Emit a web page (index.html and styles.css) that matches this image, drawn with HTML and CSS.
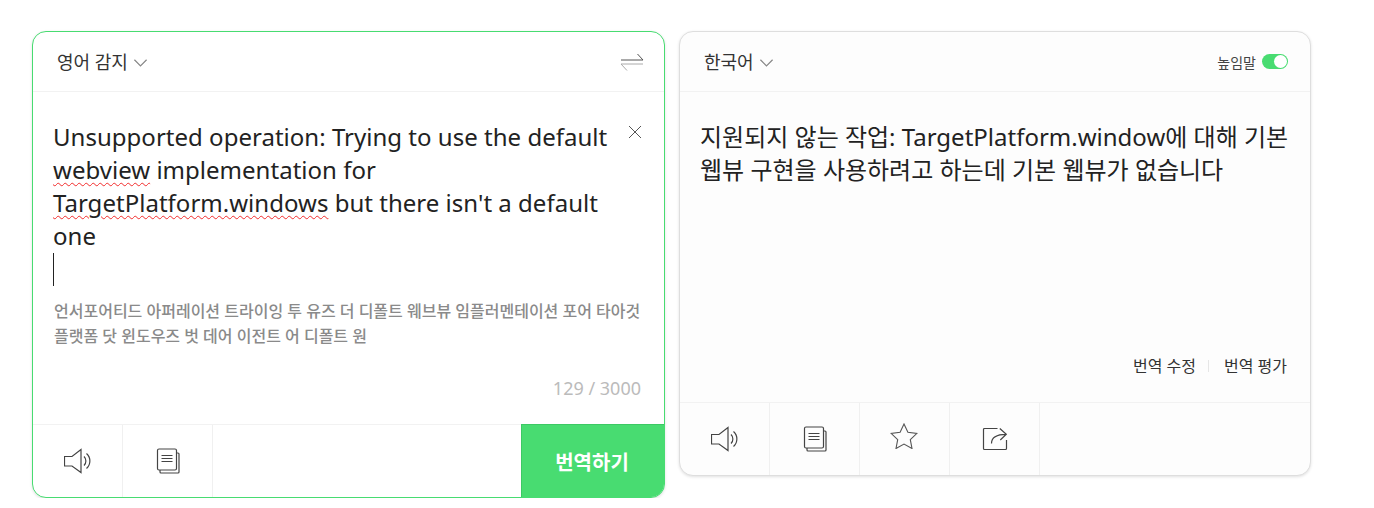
FILE: index.html
```html
<!DOCTYPE html>
<html lang="ko">
<head>
    <meta charset="UTF-8">
    <title>번역</title>
    <link rel="stylesheet" href="styles.css">
</head>
<body>

    <div class="page">
        <section class="card card-source">
            <div class="card-head">
                <button class="lang">영어 감지
                    <svg class="chevron" width="15" height="10" viewBox="0 0 16 10"><path d="M1.500 1.500 8 8l6.500-6.500"/></svg>
                </button>
                <svg class="swap" width="24" height="20" viewBox="0 0 24 20"><path class="dark" d="M1 8h22L17.500 2"/><path d="M23 12H1l6 6.500"/></svg>
            </div>
            <div class="card-body">
                <svg class="clear" width="14" height="14" viewBox="0 0 14 14"><path d="M1 1l12 12M13 1 1 13"/></svg>
                <p class="source-text">Unsupported operation: Trying to use the default <span class="typo">webview</span> implementation for <span class="typo">TargetPlatform.windows</span> but there isn't a default one</p>
                <div class="caret"></div>
                <p class="reading">언서포어티드 아퍼레이션 트라이잉 투 유즈 더 디폴트 웨브뷰 임플러멘테이션 포어 타아것 플랫폼 닷 윈도우즈 벗 데어 이전트 어 디폴트 원</p>
                <div class="count">129 / 3000</div>
            </div>
            <div class="card-foot">
                <button class="tool">
                    <svg width="28" height="26" viewBox="0 0 28 26"><path d="M.5 8.500H8L17 1.500v23L8 18H.5z"/><path d="M20 8.500c2.500 2.500 2.500 6.500 0 9M22.500 5.500c4.500 4 4.500 11 0 15"/></svg>
                </button>
                <button class="tool">
                    <svg width="26" height="26" viewBox="0 0 26 26"><rect x="2.500" y="1" width="19" height="21" rx="1.500"/><path d="M21.500 5h1.500a1 1 0 0 1 1 1v18a1 1 0 0 1-1 1H6a1 1 0 0 1-1-1v-2M6.500 7.500h11M6.500 10.500h11M6.500 13.500h11"/></svg>
                </button>
                <button class="translate">번역하기</button>
            </div>
        </section>

        <section class="card card-target">
            <div class="card-head">
                <button class="lang">한국어
                    <svg class="chevron" width="15" height="10" viewBox="0 0 16 10"><path d="M1.500 1.500 8 8l6.500-6.500"/></svg>
                </button>
                <div class="honorific">높임말 <span class="toggle"><span class="knob"></span></span></div>
            </div>
            <div class="card-body">
                <p class="target-text">지원되지 않는 작업: TargetPlatform.window에 대해 기본 웹뷰 구현을 사용하려고 하는데 기본 웹뷰가 없습니다</p>
                <div class="feedback">
                    <span>번역 수정</span>
                    <span class="sep"></span>
                    <span>번역 평가</span>
                </div>
            </div>
            <div class="card-foot">
                <button class="tool">
                    <svg width="28" height="26" viewBox="0 0 28 26"><path d="M.5 8.500H8L17 1.500v23L8 18H.5z"/><path d="M20 8.500c2.500 2.500 2.500 6.500 0 9M22.500 5.500c4.500 4 4.500 11 0 15"/></svg>
                </button>
                <button class="tool">
                    <svg width="26" height="26" viewBox="0 0 26 26"><rect x="2.500" y="1" width="19" height="21" rx="1.500"/><path d="M21.500 5h1.500a1 1 0 0 1 1 1v18a1 1 0 0 1-1 1H6a1 1 0 0 1-1-1v-2M6.500 7.500h11M6.500 10.500h11M6.500 13.500h11"/></svg>
                </button>
                <button class="tool">
                    <svg class="icon-star" width="28" height="26" viewBox="0 0 28 26"><path d="M14 1l3.900 8.300 9 1.100-6.600 6.200 1.700 8.900-8-4.400-8 4.400 1.700-8.900L1.100 10.400l9-1.100z"/></svg>
                </button>
                <button class="tool">
                    <svg width="26" height="26" viewBox="0 0 26 26"><path d="M15.500 2.500H2.500a1 1 0 0 0-1 1v19a1 1 0 0 0 1 1h21a1 1 0 0 0 1-1V14"/><path d="M9.500 17.500c0-6 4-9.200 14.700-9.200M17.800 2.500l6.500 5.800-6 5.700"/></svg>
                </button>
            </div>
        </section>
    </div>

</body>
</html>
```

FILE: styles.css
```css
body {
    margin: 0;
    background: white;
    color: #222;
    font-family: "Noto Sans", "Noto Sans CJK KR", sans-serif;
}

.page {
    display: flex;
    align-items: flex-start;
    gap: 14px;
    padding: 31px 0 0 32px;
}

.card {
    display: flex;
    flex-direction: column;
    box-sizing: border-box;
    border-radius: 14px;
    overflow: hidden;
}

.card-source {
    width: 633px;
    height: 467px;
    background: white;
    border: 1px solid #48dc71;
    box-shadow: 0 1px 3px rgba(0, 0, 0, 0.12);
}

.card-target {
    width: 632px;
    height: 445px;
    background: #fdfdfd;
    border: 1px solid #dedede;
    box-shadow: 0 1px 3px rgba(0, 0, 0, 0.12);
}

button {
    background: none;
    border: none;
    padding: 0;
    font-family: inherit;
    color: inherit;
}

svg {
    display: block;
    fill: none;
    stroke: #444;
    stroke-width: 1.2;
}

.card-head {
    display: flex;
    align-items: center;
    justify-content: space-between;
    flex: none;
    box-sizing: border-box;
    height: 60px;
    padding: 0 21px 0 24px;
    border-bottom: 1px solid #f2f2f2;
}

.lang {
    display: flex;
    align-items: center;
    gap: 5px;
    font-size: 18px;
    line-height: 24px;
    color: #333;
}

.chevron {
    stroke: #888;
    stroke-width: 1.3;
    margin-top: 2px;
}

.swap {
    stroke: #aaa;
    stroke-width: 1;
    margin-right: -1px;
}

.swap .dark {
    stroke: #555;
}

.card-body {
    position: relative;
    display: flex;
    flex-direction: column;
    flex: 1;
    padding: 28px 23px 24px 20px;
}

.card-target .card-body {
    padding-right: 20px;
}

.clear {
    position: absolute;
    top: 33px;
    right: 22px;
    stroke: #555;
    stroke-width: 1;
}

.source-text {
    margin: 0;
    width: 570px;
    font-size: 24px;
    line-height: 33px;
    letter-spacing: 0.02px;
    color: #222;
}

.typo {
    text-decoration: underline wavy #f22c2c 1px;
    text-underline-offset: 3px;
}

.caret {
    width: 1px;
    height: 33px;
    margin-top: 1px;
    background: #222;
}

.reading {
    margin: 13px -3px 0 1px;
    font-size: 16px;
    line-height: 25px;
    font-weight: 500;
    color: #8a8a8a;
}

.count {
    margin-top: auto;
    text-align: right;
    font-size: 18px;
    line-height: 24px;
    color: #bbb;
}

.target-text {
    margin: 0;
    font-size: 24px;
    line-height: 33px;
    color: #222;
}

.feedback {
    display: flex;
    align-items: center;
    justify-content: flex-end;
    margin: auto 3px 0 0;
    font-size: 16px;
    line-height: 24px;
    color: #333;
}

.sep {
    width: 1px;
    height: 12px;
    margin: 0 15px 0 12px;
    background: #e6e6e6;
}

.honorific {
    display: flex;
    align-items: center;
    gap: 6px;
    margin-right: 1px;
    font-size: 14px;
    color: #444;
}

.toggle {
    display: flex;
    justify-content: flex-end;
    box-sizing: border-box;
    width: 26px;
    height: 15px;
    padding: 1px;
    border-radius: 8px;
    background: #48dc71;
}

.knob {
    width: 13px;
    height: 13px;
    border-radius: 50%;
    background: white;
}

.card-foot {
    display: flex;
    flex: none;
    box-sizing: border-box;
    height: 73px;
    border-top: 1px solid #f2f2f2;
}

.tool {
    display: flex;
    align-items: center;
    justify-content: center;
    box-sizing: border-box;
    width: 90px;
    border-right: 1px solid #f0f0f0;
}

.icon-star {
    margin: -6px 2px 0 0;
    stroke: #555;
    stroke-width: 1.1;
}

.translate {
    width: 143px;
    margin: -1px 0 0 auto;
    padding-right: 2px;
    background: #48dc71;
    border-left: 1px solid #3cc964;
    border-top: 1px solid #3cc964;
    color: white;
    font-size: 20px;
    font-weight: 700;
}
```
